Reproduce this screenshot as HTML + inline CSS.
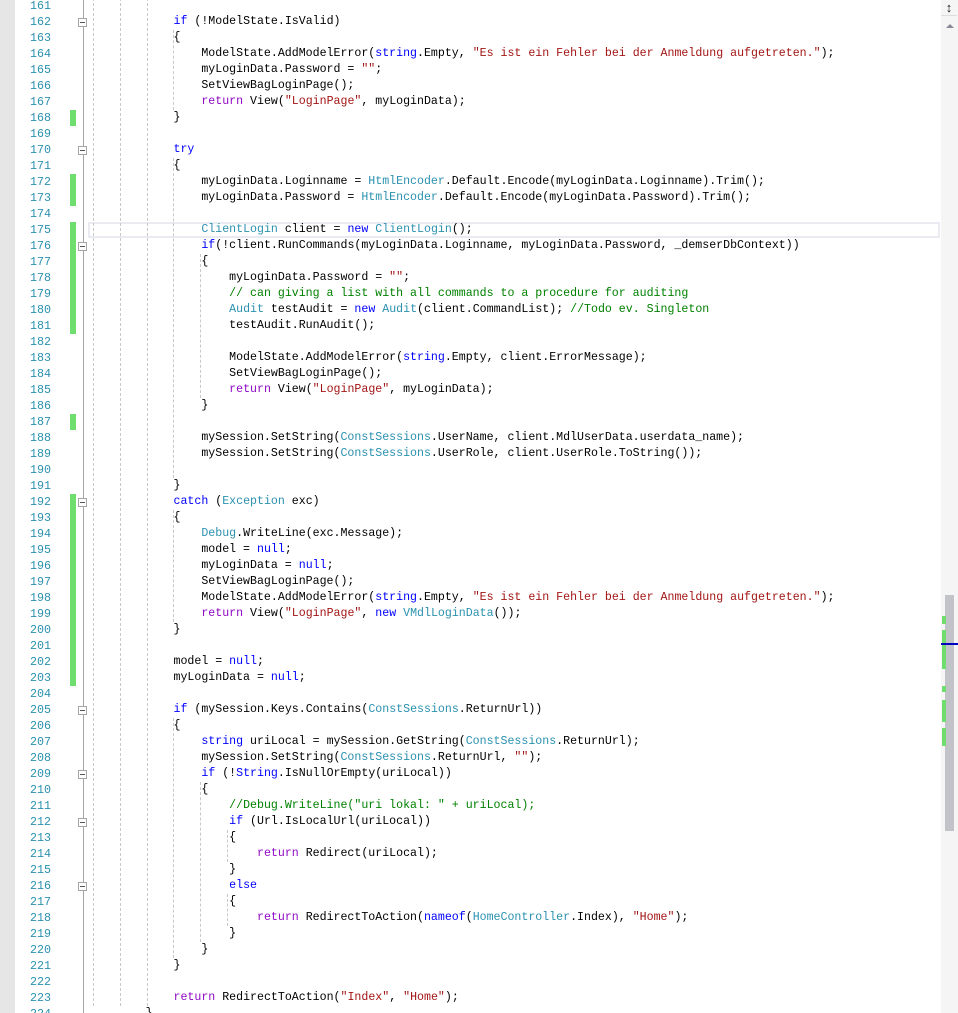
<!DOCTYPE html>
<html><head><meta charset="utf-8"><style>
html,body{margin:0;padding:0;background:#fff;width:958px;height:1013px;overflow:hidden;position:relative}
.l{position:absolute;left:90px;height:16px;line-height:16px;white-space:pre;font-family:"Liberation Mono",monospace;font-size:11.6px;color:#000}
.n{position:absolute;left:15px;width:36px;text-align:right;height:16px;line-height:16px;font-family:"Liberation Mono",monospace;font-size:11.7px;color:#2b91af}
.k{color:#0000ff}.r{color:#8f08c4}.s{color:#a31515}.t{color:#2b91af}.c{color:#008000}
.g{position:absolute;left:70px;width:6px;background:#6fde6f}
.v{position:absolute;width:0;border-left:1px dashed #c8c8c8}
.f{position:absolute;left:78px;width:9px;height:9px;border:1px solid #a5a5a5;background:#fff;box-sizing:border-box}
.f:after{content:"";position:absolute;left:1px;top:3px;width:5px;height:1px;background:#555}
.m{position:absolute;left:942px;width:4px;background:#6fde6f}
</style></head><body>
<div style="position:absolute;left:0;top:0;width:15px;height:1013px;background:#e6e6e6"></div>
<div style="position:absolute;left:83px;top:0;width:1px;height:1013px;background:#a5a5a5"></div>
<div style="position:absolute;left:88px;top:222px;width:852px;height:16px;border:2px solid #eaeaf2;box-sizing:border-box"></div>
<div style="position:absolute;left:941px;top:0;width:17px;height:1013px;background:#f5f5f5"></div>
<div style="position:absolute;left:941px;top:0;width:16px;height:15px;border-bottom:1px solid #ddd;font-size:13px;line-height:15px;text-align:center;color:#222">&#8597;</div>
<div style="position:absolute;left:946px;top:24px;width:0;height:0;border-left:4px solid transparent;border-right:4px solid transparent;border-bottom:4px solid #8a8a9a"></div>
<div style="position:absolute;left:945px;top:595px;width:9px;height:236px;background:#c2c3c9"></div>
<div class="m" style="top:616px;height:8px"></div>
<div class="m" style="top:630px;height:39px"></div>
<div class="m" style="top:686px;height:6px"></div>
<div class="m" style="top:700px;height:22px"></div>
<div class="m" style="top:728px;height:18px"></div>
<div style="position:absolute;left:941px;top:643px;width:17px;height:2px;background:#0000c0"></div>
<div id="root"></div>
<script>
(function(){
var L={
161:'',162:'            <k>if</k> (!ModelState.IsValid)',163:'            {',
164:'                ModelState.AddModelError(<k>string</k>.Empty, <s>"Es ist ein Fehler bei der Anmeldung aufgetreten."</s>);',
165:'                myLoginData.Password = <s>""</s>;',166:'                SetViewBagLoginPage();',
167:'                <r>return</r> View(<s>"LoginPage"</s>, myLoginData);',168:'            }',169:'',
170:'            <k>try</k>',171:'            {',
172:'                myLoginData.Loginname = <t>HtmlEncoder</t>.Default.Encode(myLoginData.Loginname).Trim();',
173:'                myLoginData.Password = <t>HtmlEncoder</t>.Default.Encode(myLoginData.Password).Trim();',174:'',
175:'                <t>ClientLogin</t> client = <k>new</k> <t>ClientLogin</t>();',
176:'                <k>if</k>(!client.RunCommands(myLoginData.Loginname, myLoginData.Password, _demserDbContext))',
177:'                {',178:'                    myLoginData.Password = <s>""</s>;',
179:'                    <c>// can giving a list with all commands to a procedure for auditing</c>',
180:'                    <t>Audit</t> testAudit = <k>new</k> <t>Audit</t>(client.CommandList); <c>//Todo ev. Singleton</c>',
181:'                    testAudit.RunAudit();',182:'',
183:'                    ModelState.AddModelError(<k>string</k>.Empty, client.ErrorMessage);',
184:'                    SetViewBagLoginPage();',185:'                    <r>return</r> View(<s>"LoginPage"</s>, myLoginData);',
186:'                }',187:'',
188:'                mySession.SetString(<t>ConstSessions</t>.UserName, client.MdlUserData.userdata_name);',
189:'                mySession.SetString(<t>ConstSessions</t>.UserRole, client.UserRole.ToString());',190:'',
191:'            }',192:'            <k>catch</k> (<t>Exception</t> exc)',193:'            {',
194:'                <t>Debug</t>.WriteLine(exc.Message);',195:'                model = <k>null</k>;',
196:'                myLoginData = <k>null</k>;',197:'                SetViewBagLoginPage();',
198:'                ModelState.AddModelError(<k>string</k>.Empty, <s>"Es ist ein Fehler bei der Anmeldung aufgetreten."</s>);',
199:'                <r>return</r> View(<s>"LoginPage"</s>, <k>new</k> <t>VMdlLoginData</t>());',200:'            }',201:'',
202:'            model = <k>null</k>;',203:'            myLoginData = <k>null</k>;',204:'',
205:'            <k>if</k> (mySession.Keys.Contains(<t>ConstSessions</t>.ReturnUrl))',206:'            {',
207:'                <k>string</k> uriLocal = mySession.GetString(<t>ConstSessions</t>.ReturnUrl);',
208:'                mySession.SetString(<t>ConstSessions</t>.ReturnUrl, <s>""</s>);',
209:'                <k>if</k> (!<k>String</k>.IsNullOrEmpty(uriLocal))',210:'                {',
211:'                    <c>//Debug.WriteLine("uri lokal: " + uriLocal);</c>',
212:'                    <k>if</k> (Url.IsLocalUrl(uriLocal))',213:'                    {',
214:'                        <r>return</r> Redirect(uriLocal);',215:'                    }',216:'                    <k>else</k>',217:'                    {',
218:'                        <r>return</r> RedirectToAction(<k>nameof</k>(<t>HomeController</t>.Index), <s>"Home"</s>);',
219:'                    }',220:'                }',221:'            }',222:'',
223:'            <r>return</r> RedirectToAction(<s>"Index"</s>, <s>"Home"</s>);',224:'        }'};
var h='';function tp(n){return (n-161)*16-2;}
function gx(c){return Math.round(93+c*6.7);}
[[0,161,224],[4,161,224],[8,161,224],[12,163,168],[12,171,191],[12,193,200],[12,206,221],[16,177,186],[16,210,220],[20,213,215],[20,217,219]].forEach(function(b){
 h+='<div class="v" style="left:'+gx(b[0])+'px;top:'+tp(b[1])+'px;height:'+(tp(b[2])-tp(b[1]))+'px"></div>';});
[[168,168],[172,173],[175,181],[187,187],[192,203]].forEach(function(g){h+='<div class="g" style="top:'+tp(g[0])+'px;height:'+(tp(g[1]+1)-tp(g[0]))+'px"></div>';});
[162,170,176,192,205,209,212,216].forEach(function(n){h+='<div class="f" style="top:'+(tp(n)+4)+'px"></div>';});
for(var n=161;n<=224;n++){
 var s=L[n].replace(/<(k|r|s|t|c)>/g,'<span class="$1">').replace(/<\/(k|r|s|t|c)>/g,'</span>');
 h+='<div class="n" style="top:'+tp(n)+'px">'+n+'</div><div class="l" style="top:'+tp(n)+'px">'+s+'</div>';}
document.getElementById('root').innerHTML=h;
})();
</script>
</body></html>
